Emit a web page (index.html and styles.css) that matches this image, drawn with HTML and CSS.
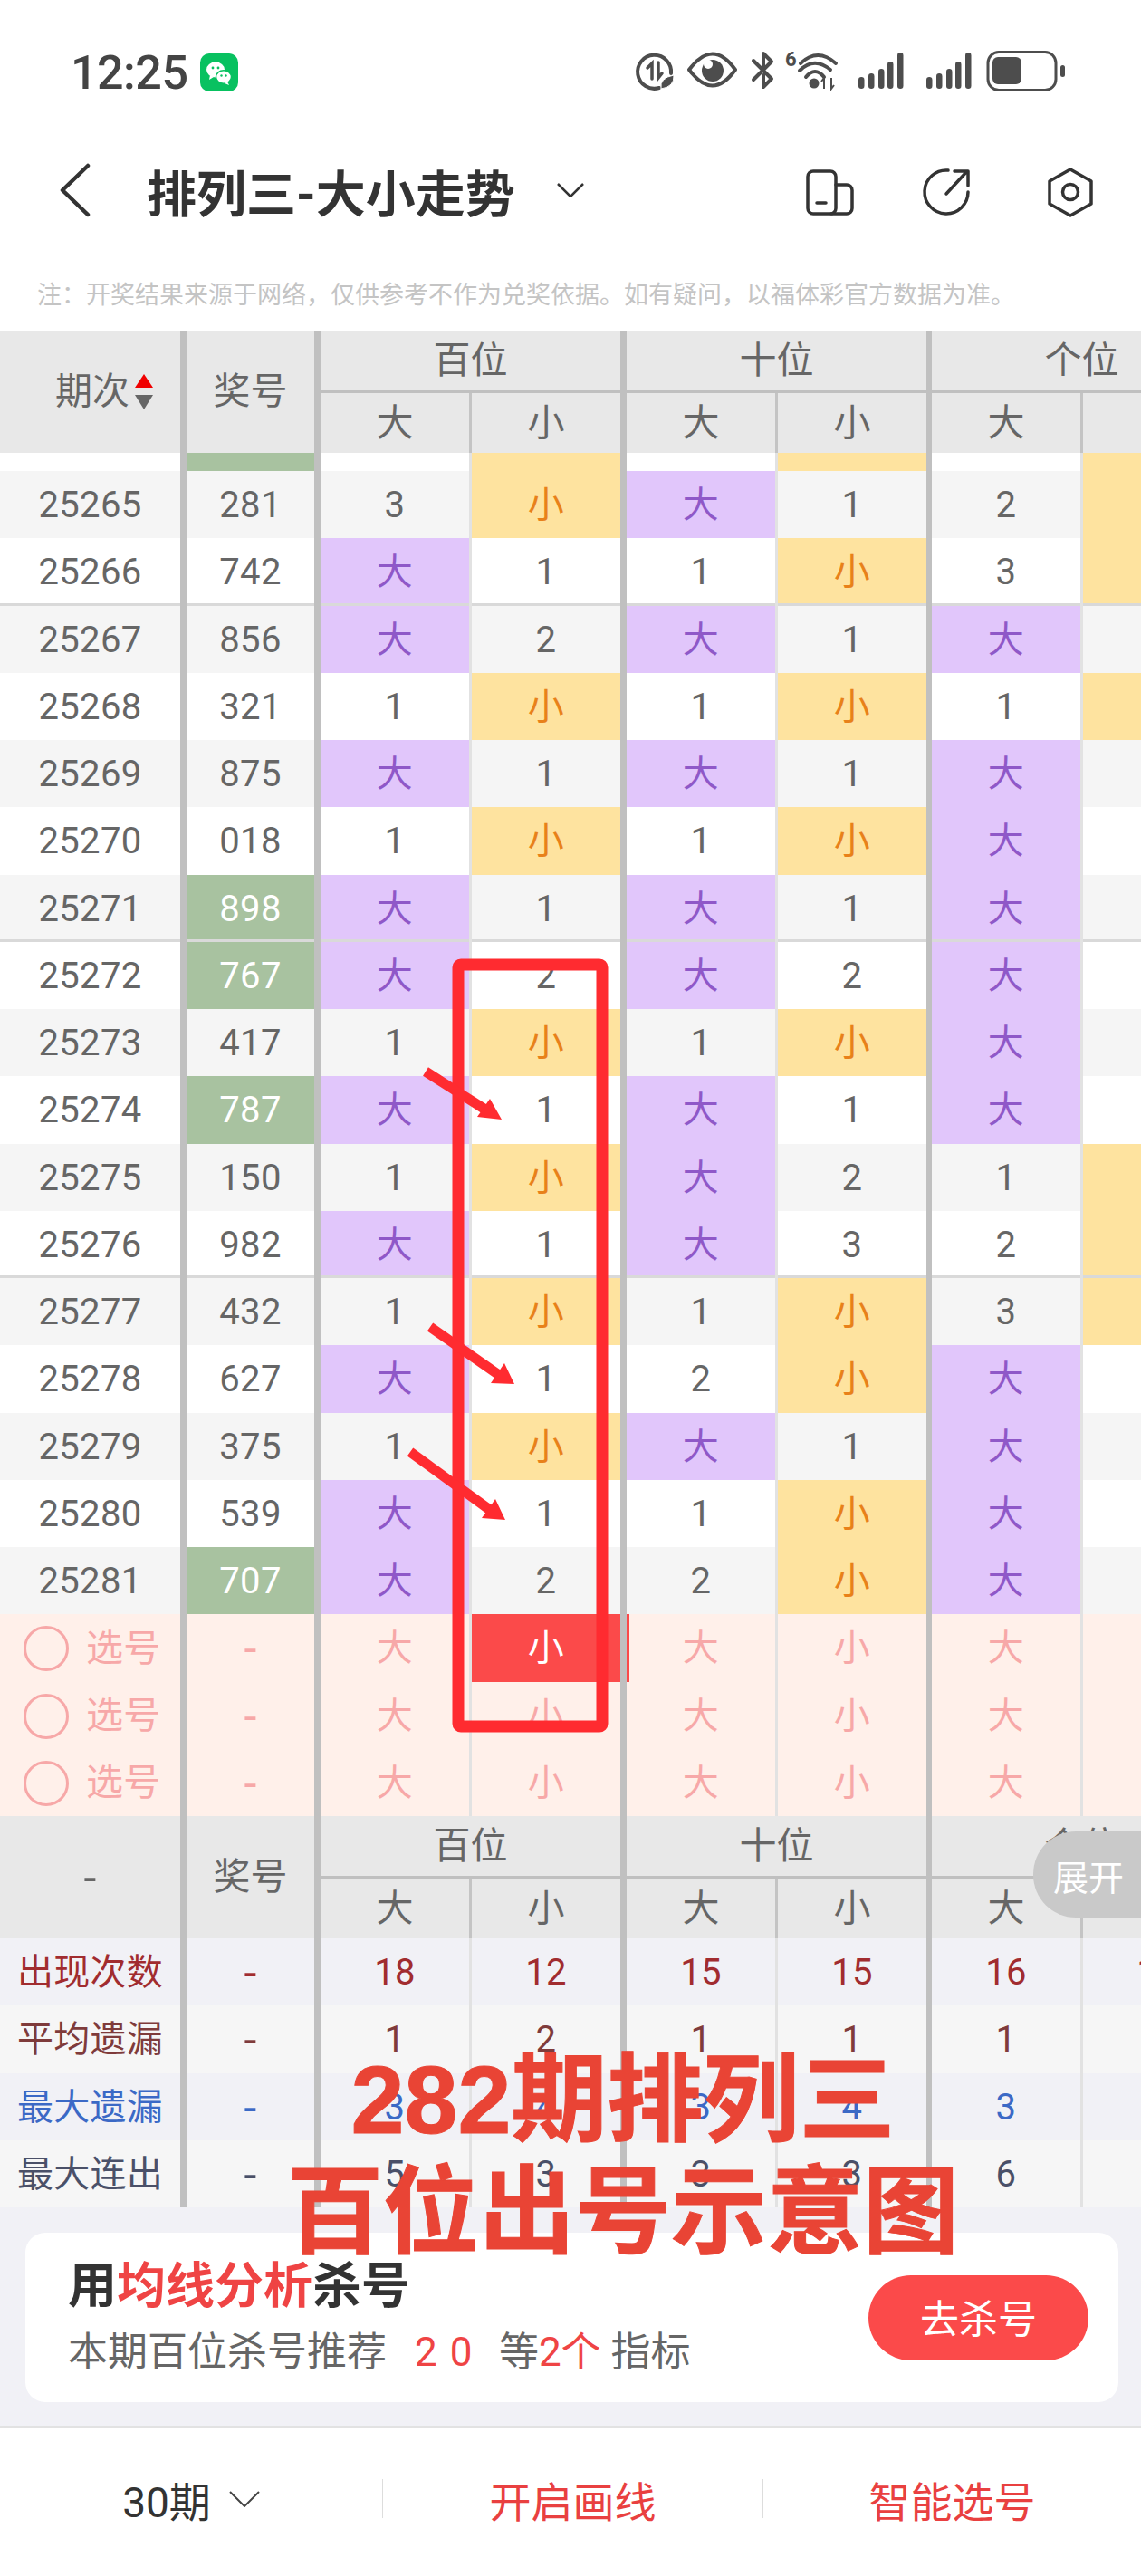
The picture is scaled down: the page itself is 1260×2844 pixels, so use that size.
FILE: index.html
```html
<!DOCTYPE html>
<html lang="zh-CN">
<head>
  <meta charset="UTF-8">
  <title>排列三-大小走势</title>
  <link rel="stylesheet" href="styles.css">
</head>
<body>
<div class="page">

  <!-- Status bar -->
  <div class="status">
    <span class="time">12:25</span>
    <svg class="wechat" viewBox="0 0 42 42">
      <rect width="42" height="42" rx="10" fill="#08c160"/>
      <ellipse cx="17" cy="18" rx="10" ry="8.5" fill="#fff"/>
      <path d="M11 24l-1 5 5-3z" fill="#fff"/>
      <circle cx="14" cy="16" r="1.4" fill="#08c160"/>
      <circle cx="20" cy="16" r="1.4" fill="#08c160"/>
      <ellipse cx="26" cy="26" rx="8.5" ry="7.2" stroke="#08c160" stroke-width="1.5" fill="#fff"/>
      <path d="M30 31l2 4-5-2z" fill="#fff"/>
      <circle cx="23.5" cy="24.5" r="1.2" fill="#08c160"/>
      <circle cx="28.5" cy="24.5" r="1.2" fill="#08c160"/>
    </svg>
    <svg class="status-icons" viewBox="0 0 520 80">
      <g fill="none" stroke="#4d4d4d" stroke-width="4" stroke-linecap="round">
        <path d="M48 57A18.500 18.500 0 1 1 61 41"/>
        <path d="M40 47V30l-5 5M47 29v17l4-5" stroke-width="3.500"/>
        <path d="M81 37Q107 2 132 37Q107 72 81 37Z" stroke-linejoin="round"/>
        <path d="M152 48L172 28L163 19V33M152 27L172 47L163 56V43" stroke-linejoin="round"/>
        <path d="M204 30Q223 12 243 30"/>
        <path d="M203 38Q219 22 237 37" />
        <path d="M210 45Q220 33 230 45"/>
      </g>
      <circle cx="107" cy="38" r="12" fill="#4d4d4d"/>
      <circle cx="102" cy="31" r="5" fill="#fff"/>
      <path d="M50 58q-2-12 14-15q1 13-14 15z" fill="#4d4d4d" stroke="#fff" stroke-width="1"/>
      <circle cx="219" cy="52" r="5.500" fill="#4d4d4d"/>
      <path d="M230 58V46l-3 4M238 46v12l3-4" fill="none" stroke="#4d4d4d" stroke-width="2"/>
      <text x="187" y="33" class="wifi-six">6</text>
      <g fill="#4d4d4d">
        <rect x="268" y="45" width="6.500" height="13" rx="3.200"/>
        <rect x="279" y="41" width="6.500" height="17" rx="3.200"/>
        <rect x="290" y="36" width="6.500" height="22" rx="3.200"/>
        <rect x="300" y="28" width="6.500" height="30" rx="3.200"/>
        <rect x="311" y="18" width="6.500" height="40" rx="3.200"/>
        <rect x="343" y="45" width="6.500" height="13" rx="3.200"/>
        <rect x="354" y="41" width="6.500" height="17" rx="3.200"/>
        <rect x="365" y="36" width="6.500" height="22" rx="3.200"/>
        <rect x="375" y="28" width="6.500" height="30" rx="3.200"/>
        <rect x="386" y="18" width="6.500" height="40" rx="3.200"/>
        <rect x="416" y="23" width="32" height="30" rx="6"/>
        <rect x="491" y="32" width="5" height="13" rx="2.500"/>
      </g>
      <rect x="411" y="17.500" width="75" height="42" rx="12" fill="none" stroke="#4d4d4d" stroke-width="3"/>
    </svg>
  </div>

  <!-- Title bar -->
  <div class="nav">
    <svg class="back" viewBox="0 0 40 60">
      <path d="M33 3L5 30l28 27" fill="none" stroke="#333" stroke-width="4.500" stroke-linecap="round" stroke-linejoin="round"/>
    </svg>
    <h1 class="title">排列三-大小走势</h1>
    <svg class="title-arrow" viewBox="0 0 30 16">
      <path d="M1 1l14 14L29 1" fill="none" stroke="#333" stroke-width="2.500"/>
    </svg>
    <svg class="nav-icons" viewBox="0 0 340 80">
      <g fill="none" stroke="#333" stroke-width="3.500" stroke-linecap="round" stroke-linejoin="round">
        <rect x="12" y="19" width="31" height="47" rx="6"/>
        <path d="M43 34h12a6 6 0 0 1 6 6v20a6 6 0 0 1-6 6H38"/>
        <path d="M22 54h10"/>
        <path d="M167 18A24 24 0 1 0 189 42"/>
        <path d="M165 44L188 19M174 19h15v16"/>
        <path d="M302 17l23 13v25l-23 13-23-13V30z"/>
        <circle cx="302" cy="42" r="8.500"/>
      </g>
    </svg>
  </div>

  <div class="note">注：开奖结果来源于网络，仅供参考不作为兑奖依据。如有疑问，以福体彩官方数据为准。</div>

  <!-- Trend table -->
  <div class="head">
    <div class="head-cell head-issue thick">期次<span class="sort"><i class="sort-up"></i><i class="sort-down"></i></span></div>
    <div class="head-cell head-tall thick">奖号</div>
    <div class="head-group thick">百位</div>
    <div class="head-group thick narrow">十位</div>
    <div class="head-group">个位</div>
    <div class="head-cell thin">大</div>
    <div class="head-cell thick">小</div>
    <div class="head-cell thin">大</div>
    <div class="head-cell thick narrow">小</div>
    <div class="head-cell thin">大</div>
    <div class="head-cell"></div>
  </div>

  <div class="rows">
    <div class="row row-cut"><div></div><div class="win"></div><div></div><div class="small"></div><div></div><div class="small"></div><div></div><div class="small"></div></div>
    <div class="row"><div>25265</div><div>281</div><div>3</div><div class="small">小</div><div class="big">大</div><div>1</div><div>2</div><div class="small"></div></div>
    <div class="row row-end"><div>25266</div><div>742</div><div class="big">大</div><div>1</div><div>1</div><div class="small">小</div><div>3</div><div class="small"></div></div>
    <div class="row"><div>25267</div><div>856</div><div class="big">大</div><div>2</div><div class="big">大</div><div>1</div><div class="big">大</div><div></div></div>
    <div class="row"><div>25268</div><div>321</div><div>1</div><div class="small">小</div><div>1</div><div class="small">小</div><div>1</div><div class="small"></div></div>
    <div class="row"><div>25269</div><div>875</div><div class="big">大</div><div>1</div><div class="big">大</div><div>1</div><div class="big">大</div><div></div></div>
    <div class="row"><div>25270</div><div>018</div><div>1</div><div class="small">小</div><div>1</div><div class="small">小</div><div class="big">大</div><div></div></div>
    <div class="row row-end"><div>25271</div><div class="win">898</div><div class="big">大</div><div>1</div><div class="big">大</div><div>1</div><div class="big">大</div><div></div></div>
    <div class="row"><div>25272</div><div class="win">767</div><div class="big">大</div><div>2</div><div class="big">大</div><div>2</div><div class="big">大</div><div></div></div>
    <div class="row"><div>25273</div><div>417</div><div>1</div><div class="small">小</div><div>1</div><div class="small">小</div><div class="big">大</div><div></div></div>
    <div class="row"><div>25274</div><div class="win">787</div><div class="big">大</div><div>1</div><div class="big">大</div><div>1</div><div class="big">大</div><div></div></div>
    <div class="row"><div>25275</div><div>150</div><div>1</div><div class="small">小</div><div class="big">大</div><div>2</div><div>1</div><div class="small"></div></div>
    <div class="row row-end"><div>25276</div><div>982</div><div class="big">大</div><div>1</div><div class="big">大</div><div>3</div><div>2</div><div class="small"></div></div>
    <div class="row"><div>25277</div><div>432</div><div>1</div><div class="small">小</div><div>1</div><div class="small">小</div><div>3</div><div class="small"></div></div>
    <div class="row"><div>25278</div><div>627</div><div class="big">大</div><div>1</div><div>2</div><div class="small">小</div><div class="big">大</div><div></div></div>
    <div class="row"><div>25279</div><div>375</div><div>1</div><div class="small">小</div><div class="big">大</div><div>1</div><div class="big">大</div><div></div></div>
    <div class="row"><div>25280</div><div>539</div><div class="big">大</div><div>1</div><div>1</div><div class="small">小</div><div class="big">大</div><div></div></div>
    <div class="row"><div>25281</div><div class="win">707</div><div class="big">大</div><div>2</div><div>2</div><div class="small">小</div><div class="big">大</div><div></div></div>

    <!-- Pick rows -->
    <div class="row row-pick"><div class="pick"><span class="ring"></span>选号</div><div class="dash">-</div><div>大</div><div class="picked">小</div><div>大</div><div>小</div><div>大</div><div></div></div>
    <div class="row row-pick"><div class="pick"><span class="ring"></span>选号</div><div class="dash">-</div><div>大</div><div>小</div><div>大</div><div>小</div><div>大</div><div></div></div>
    <div class="row row-pick"><div class="pick"><span class="ring"></span>选号</div><div class="dash">-</div><div>大</div><div>小</div><div>大</div><div>小</div><div>大</div><div></div></div>
  </div>

  <div class="head">
    <div class="head-cell head-tall thick dash">-</div>
    <div class="head-cell head-tall thick">奖号</div>
    <div class="head-group thick">百位</div>
    <div class="head-group thick narrow">十位</div>
    <div class="head-group">个位</div>
    <div class="head-cell thin">大</div>
    <div class="head-cell thick">小</div>
    <div class="head-cell thin">大</div>
    <div class="head-cell thick narrow">小</div>
    <div class="head-cell thin">大</div>
    <div class="head-cell"></div>
  </div>

  <div class="rows">
    <div class="row row-stat stat-count"><div>出现次数</div><div class="dash">-</div><div>18</div><div>12</div><div>15</div><div>15</div><div>16</div><div class="clipped">14</div></div>
    <div class="row row-stat stat-avg"><div>平均遗漏</div><div class="dash">-</div><div>1</div><div>2</div><div>1</div><div>1</div><div>1</div><div></div></div>
    <div class="row row-stat stat-max"><div>最大遗漏</div><div class="dash">-</div><div>3</div><div>4</div><div>3</div><div>4</div><div>3</div><div></div></div>
    <div class="row row-stat stat-run"><div>最大连出</div><div class="dash">-</div><div>5</div><div>3</div><div>3</div><div>3</div><div>6</div><div></div></div>
  </div>

  <!-- Promo card -->
  <div class="promo">
    <div class="card">
      <div class="card-text">
        <div class="card-title">用<span class="hl">均线分析</span>杀号</div>
        <div class="card-sub">本期百位杀号推荐<span class="hl card-nums">2 0</span><span class="card-deng">等<span class="hl">2个</span></span> 指标</div>
      </div>
      <div class="card-btn">去杀号</div>
    </div>
  </div>

  <!-- Bottom bar -->
  <div class="footer">
    <div class="foot-item">30期
      <svg class="foot-arrow" viewBox="0 0 34 18"><path d="M1 1l16 16L33 1" fill="none" stroke="#444" stroke-width="2"/></svg>
    </div>
    <div class="foot-item foot-red">开启画线</div>
    <div class="foot-item foot-red">智能选号</div>
  </div>

  <div class="expand">展开</div>

  <!-- Hand-drawn marks on the screenshot -->
  <svg class="marks" viewBox="0 0 1260 2844">
    <rect x="506" y="1065" width="159" height="841" rx="3" fill="none" stroke="#ff2b30" stroke-width="13"/>
    <g stroke="#ff2b30" stroke-width="11">
      <path d="M470 1183L536 1225"/>
      <path d="M475 1465L551 1518"/>
      <path d="M453 1603L541 1667"/>
    </g>
    <g fill="#ff2b30">
      <path d="M554 1236L541 1213L527 1233z"/>
      <path d="M568 1528L557 1505L542 1527z"/>
      <path d="M558 1678L547 1655L532 1676z"/>
    </g>
  </svg>
  <div class="caption">282期排列三<br>百位出号示意图</div>

</div>
</body>
</html>
```

FILE: styles.css
```css
* {
  box-sizing: border-box;
}
body {
  margin: 0;
  font-family: Roboto, "Noto Sans CJK SC", sans-serif;
  background: #fff;
}
.page {
  position: relative;
  width: 1260px;
  height: 2844px;
  overflow: hidden;
  background: #fff;
}

/* status bar */
.status {
  display: flex;
  align-items: center;
  height: 160px;
  padding: 0 60px 0 78px;
}
.time {
  font-size: 52px;
  font-weight: 500;
  color: #444;
  letter-spacing: -0.5px;
}
.wechat {
  width: 42px;
  height: 42px;
  margin-left: 14px;
}
.status-icons {
  width: 520px;
  height: 80px;
  margin-left: auto;
}
.wifi-six {
  font-family: Roboto, sans-serif;
  font-size: 22px;
  font-weight: 700;
  fill: #4d4d4d;
}

/* title bar */
.nav {
  display: flex;
  align-items: center;
  height: 100px;
  padding-left: 64px;
  padding-right: 40px;
}
.back {
  width: 40px;
  height: 60px;
}
.title {
  margin: 0 0 0 58px;
  font-size: 55px;
  font-weight: 700;
  color: #333;
  white-space: nowrap;
}
.title-arrow {
  width: 30px;
  height: 16px;
  margin-left: 46px;
}
.nav-icons {
  width: 340px;
  height: 80px;
  margin-left: auto;
}
.note {
  height: 105px;
  padding: 48px 0 0 41px;
  font-size: 27px;
  line-height: 36px;
  color: #c4c4c4;
  white-space: nowrap;
}

/* table header */
.head {
  display: grid;
  grid-template-columns: 206px 148px 167px 171px 167px 170px 167px 164px;
  grid-template-rows: 69px 66px;
  width: 1360px;
  height: 135px;
  background: #e8e8e8;
  font-size: 41px;
  color: #666;
}
.head-cell,
.head-group {
  display: flex;
  align-items: center;
  justify-content: center;
  line-height: 1;
}
.head-tall {
  grid-row: span 2;
}
.head-issue {
  grid-row: span 2;
  justify-content: flex-start;
  padding-left: 61px;
}
.head-group {
  grid-column: span 2;
  border-bottom: 3px solid #c0c0c0;
}
.thick {
  border-right: 7px solid #c0c0c0;
}
.thick.narrow {
  border-right-width: 6px;
}
.thin {
  border-right: 3px solid #c4c4c4;
}
.sort {
  display: flex;
  flex-direction: column;
  gap: 8px;
  margin-left: 6px;
}
.sort-up,
.sort-down {
  width: 0;
  height: 0;
  border-left: 10px solid transparent;
  border-right: 10px solid transparent;
}
.sort-up {
  border-bottom: 15px solid #f00000;
}
.sort-down {
  border-top: 16px solid #666;
}

/* table rows */
.rows {
  width: 1360px;
}
.row {
  display: grid;
  grid-template-columns: 206px 148px 167px 171px 167px 170px 167px 164px;
  height: 74.25px;
  font-size: 40px;
  color: #666;
  background: #fff;
}
.row:nth-child(even) {
  background: #f5f5f5;
}
.row > div {
  display: flex;
  align-items: center;
  justify-content: center;
  padding-top: 2px;
  line-height: 1;
  letter-spacing: 0.3px;
  border-right: 3px solid #e2e2e2;
}
.row > div:nth-child(1),
.row > div:nth-child(2),
.row > div:nth-child(4) {
  border-right: 7px solid #c0c0c0;
}
.row > div:nth-child(6) {
  border-right: 6px solid #c0c0c0;
}
.row > div:nth-child(8) {
  border-right: 0;
}
.row-cut {
  height: 20px;
}
.row-end > div {
  box-shadow: inset 0 -3px 0 #d9d9d9;
}
.big {
  background: #e1c6fb;
  color: #8f58c8;
}
.small {
  background: #fee39f;
  color: #e8811a;
}
.win {
  background: #a8c2a0;
  color: #fff;
}
.dash,
.row > .dash {
  font-size: 50px;
}

/* pick rows */
.row-pick,
.row-pick:nth-child(even) {
  background: #fff0ea;
  color: #f7a8a8;
}
.row-pick > .pick {
  justify-content: flex-start;
  gap: 19px;
  padding-left: 26px;
  font-size: 41px;
}
.ring {
  width: 50px;
  height: 50px;
  border: 3px solid #f7a8a8;
  border-radius: 50%;
}
.row-pick > .picked {
  background: #fb4a4a;
  color: #fff;
  box-shadow: 3px 0 0 #fb4a4a;
}

/* stat rows */
.row-stat:nth-child(odd) {
  background: #f1f1f6;
}
.row-stat:nth-child(even) {
  background: #f6f6f6;
}
.stat-count {
  color: #a12c2f;
}
.stat-avg {
  color: #7f3b3b;
}
.stat-max {
  color: #3b69c6;
}
.stat-run {
  color: #4a5068;
}

/* promo card */
.promo {
  height: 241px;
  padding: 28px 25px 0 28px;
  background: #f1f1f6;
}
.card {
  display: flex;
  align-items: center;
  justify-content: space-between;
  height: 187px;
  padding: 0 33px 0 47px;
  background: #fff;
  border-radius: 22px;
}
.card-title {
  font-size: 54px;
  font-weight: 700;
  line-height: 64px;
  color: #333;
}
.card-sub {
  margin-top: 12px;
  font-size: 44px;
  line-height: 56px;
  color: #666;
  white-space: pre;
}
.hl {
  color: #ef4444;
}
.card-nums {
  margin-left: 31px;
  letter-spacing: 1.5px;
}
.card-deng {
  margin-left: 28px;
}
.card-btn {
  display: flex;
  align-items: center;
  justify-content: center;
  width: 243px;
  height: 94px;
  padding-bottom: 4px;
  font-size: 43px;
  color: #fff;
  background: #fb4a4a;
  border-radius: 47px;
}

/* bottom bar */
.footer {
  display: grid;
  grid-template-columns: 422px 420px 418px;
  align-items: center;
  height: 166px;
  padding-bottom: 8px;
  background: #fff;
  border-top: 3px solid #e2e2e2;
}
.foot-item {
  display: flex;
  align-items: center;
  justify-content: center;
  gap: 20px;
  height: 43px;
  font-size: 46px;
  color: #333;
}
.foot-item + .foot-item {
  border-left: 1px solid #ddd;
}
.foot-red {
  color: #e94040;
}
.foot-arrow {
  width: 34px;
  height: 18px;
}

/* things lying over the table */
.expand {
  position: absolute;
  top: 2022px;
  right: 0;
  display: flex;
  align-items: center;
  width: 119px;
  height: 95px;
  padding-left: 22px;
  font-size: 39px;
  color: #fff;
  background: #c9c9c9;
  border-radius: 47px 0 0 47px;
}
.marks {
  position: absolute;
  top: 0;
  left: 0;
  width: 1260px;
  height: 2844px;
}
.caption {
  position: absolute;
  top: 2256px;
  left: 0;
  width: 1376px;
  font-family: "Liberation Sans", "Noto Sans CJK SC", sans-serif;
  font-size: 106px;
  font-weight: 700;
  line-height: 124px;
  text-align: center;
  color: #e94435;
  -webkit-text-stroke: 1px #e94435;
}
```
